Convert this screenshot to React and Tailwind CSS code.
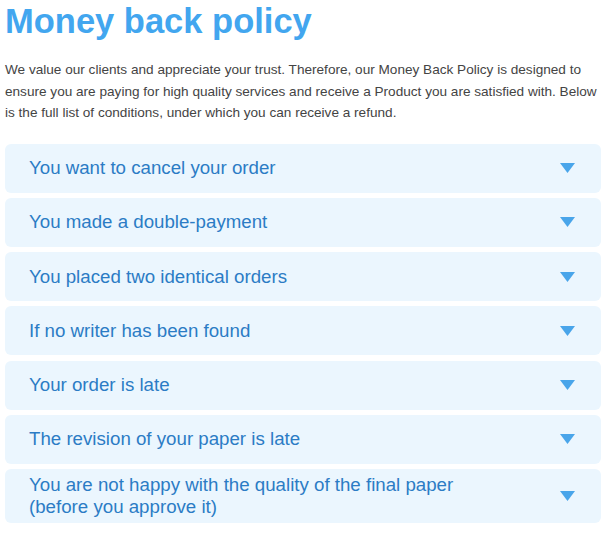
import React from 'react';

const items = [
  'You want to cancel your order',
  'You made a double-payment',
  'You placed two identical orders',
  'If no writer has been found',
  'Your order is late',
  'The revision of your paper is late',
  'You are not happy with the quality of the final paper (before you approve it)',
];

const Arrow = () => (
  <svg width="15" height="10" viewBox="0 0 15 10" className="shrink-0">
    <path d="M0 0 H15 L7.5 10 Z" fill="#49a5ea" />
  </svg>
);

export default function App() {
  return (
    <div className="w-[606px] h-[533px] bg-white px-[5px] [font-family:'Liberation_Sans',Arial,sans-serif] overflow-hidden">
      <h1 className="text-[34.5px] font-bold leading-[40px] text-[#42a6ef] pt-[1px]">Money back policy</h1>
      <p className="mt-[18px] text-[13.6px] leading-[21.5px] text-[#444] pr-[3px]">
        We value our clients and appreciate your trust. Therefore, our Money Back Policy is designed to ensure you are paying for high quality services and receive a Product you are satisfied with. Below is the full list of conditions, under which you can receive a refund.
      </p>
      <div className="mt-[20px] flex flex-col gap-[5.3px] w-[596px]">
        {items.map((t, i) => (
          <div
            key={i}
            className={`flex items-center justify-between bg-[#ebf6fe] rounded-[6px] pl-[24px] pr-[26px] ${i === items.length - 1 ? 'min-h-[54px]' : 'min-h-[49px]'}`}
          >
            <span className={`text-[18.7px] leading-[22px] text-[#2b7cc5] ${i === items.length - 1 ? 'max-w-[460px]' : ''}`}>{t}</span>
            <Arrow />
          </div>
        ))}
      </div>
    </div>
  );
}
